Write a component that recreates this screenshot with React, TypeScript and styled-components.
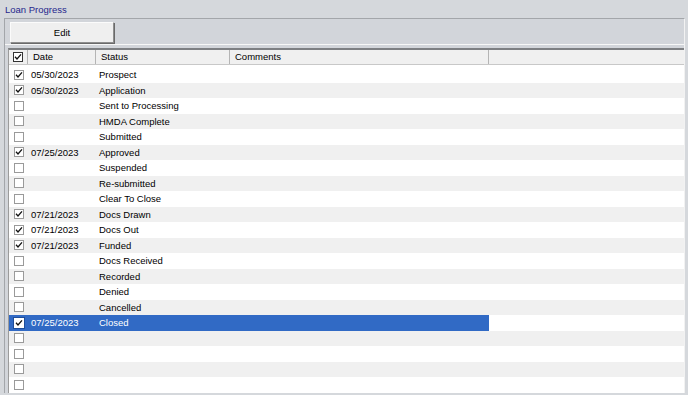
import React from 'react'
import styled, { createGlobalStyle } from 'styled-components'

interface IStep {
  date: string
  status: string
  checked: boolean
}

const steps: IStep[] = [
  { date: '05/30/2023', status: 'Prospect', checked: true },
  { date: '05/30/2023', status: 'Application', checked: true },
  { date: '', status: 'Sent to Processing', checked: false },
  { date: '', status: 'HMDA Complete', checked: false },
  { date: '', status: 'Submitted', checked: false },
  { date: '07/25/2023', status: 'Approved', checked: true },
  { date: '', status: 'Suspended', checked: false },
  { date: '', status: 'Re-submitted', checked: false },
  { date: '', status: 'Clear To Close', checked: false },
  { date: '07/21/2023', status: 'Docs Drawn', checked: true },
  { date: '07/21/2023', status: 'Docs Out', checked: true },
  { date: '07/21/2023', status: 'Funded', checked: true },
  { date: '', status: 'Docs Received', checked: false },
  { date: '', status: 'Recorded', checked: false },
  { date: '', status: 'Denied', checked: false },
  { date: '', status: 'Cancelled', checked: false },
  { date: '07/25/2023', status: 'Closed', checked: true },
  { date: '', status: '', checked: false },
  { date: '', status: '', checked: false },
  { date: '', status: '', checked: false },
  { date: '', status: '', checked: false },
]

const SELECTED = 16

const GlobalStyle = createGlobalStyle`
  body {
    margin: 0;
    background: #d5d8dc;
    font-family: "Liberation Sans", Arial, sans-serif;
    font-size: 9.5px;
    color: #000;
    overflow: hidden;
  }
`

const Check: React.FC<{ on: boolean; header?: boolean; inverted?: boolean }> = ({ on, header, inverted }) => (
  <CheckBox $header={header} $inverted={inverted}>
    {on && (
      <svg width="8" height="8" viewBox="0 0 8 8">
        <path d="M1 3.8 L3 6 L7 1.4" fill="none" stroke="#111" strokeWidth="1.3" />
      </svg>
    )}
  </CheckBox>
)

export default function App() {
  return (
    <Page>
      <GlobalStyle />
      <Title>Loan Progress</Title>
      <Group>
        <Toolbar>
          <EditButton>Edit</EditButton>
        </Toolbar>
        <Grid>
          <HeaderRow>
            <HeadCell $w={19} $center>
              <Check on header />
            </HeadCell>
            <HeadCell $w={68}>Date</HeadCell>
            <HeadCell $w={134}>Status</HeadCell>
            <HeadCell $w={259}>Comments</HeadCell>
            <HeadFill />
          </HeaderRow>
          <Body>
            {steps.map((s, i) => (
              <Row key={i} $alt={i % 2 === 1}>
                <RowSelect $selected={i === SELECTED}>
                  <Cell $w={19} $center>
                    <Check on={s.checked} inverted={i === SELECTED} />
                  </Cell>
                  <Cell $w={68}>{s.date}</Cell>
                  <Cell $w={134}>{s.status}</Cell>
                  <Cell $w={259} />
                </RowSelect>
              </Row>
            ))}
          </Body>
        </Grid>
      </Group>
    </Page>
  )
}

const Page = styled.div`
  width: 688px;
  height: 395px;
  overflow: hidden;
`

const Title = styled.div`
  height: 18px;
  padding-left: 5px;
  line-height: 20px;
  color: #26268c;
`

const Group = styled.div`
  margin-left: 4px;
  width: 679px;
  border-top: 1px solid #a3a6aa;
  border-left: 1px solid #a3a6aa;
  border-right: 1px solid #f2f2f2;
  background: #d2d5da;
`

const Toolbar = styled.div`
  height: 26px;
  padding: 3px 0 0 5px;
  box-sizing: border-box;
  border-bottom: 1px solid #f7f7f7;
`

const EditButton = styled.div`
  width: 104px;
  height: 21px;
  box-sizing: border-box;
  display: flex;
  align-items: center;
  justify-content: center;
  background: #efefef;
  border: 1px solid #fbfbfb;
  border-right-color: #8e8e8e;
  border-bottom-color: #8e8e8e;
  box-shadow: 1px 1px 0 #6a6a6a;
`

const Grid = styled.div`
  margin: 3px 0 0 3px;
  border-top: 2px solid #7d7f82;
  border-left: 1px solid #9b9b9b;
  background: #fff;
`

const HeaderRow = styled.div`
  display: flex;
  height: 15px;
  background: #f0f0f0;
  border-bottom: 1px solid #c8c8c8;
  box-sizing: border-box;
`

const HeadCell = styled.div<{ $w: number; $center?: boolean }>`
  width: ${(p) => p.$w}px;
  flex: none;
  box-sizing: border-box;
  display: flex;
  align-items: center;
  justify-content: ${(p) => (p.$center ? 'center' : 'flex-start')};
  padding-left: ${(p) => (p.$center ? 0 : 5)}px;
  border-right: 1px solid #b4b4b4;
  line-height: 14px;
`

const HeadFill = styled.div`
  flex: 1;
`

const Body = styled.div`
  padding-top: 2px;
`

const Row = styled.div<{ $alt: boolean }>`
  height: 15.5px;
  display: flex;
  background: ${(p) => (p.$alt ? '#f0f0f0' : '#fff')};
`

const RowSelect = styled.div<{ $selected: boolean }>`
  display: flex;
  height: 100%;
  background: ${(p) => (p.$selected ? '#316ac5' : 'transparent')};
  color: ${(p) => (p.$selected ? '#fff' : '#000')};
`

const Cell = styled.div<{ $w: number; $center?: boolean }>`
  width: ${(p) => p.$w}px;
  flex: none;
  box-sizing: border-box;
  display: flex;
  align-items: center;
  justify-content: ${(p) => (p.$center ? 'center' : 'flex-start')};
  padding-left: ${(p) => (p.$center ? 0 : 3)}px;
  white-space: nowrap;
`

const CheckBox = styled.div<{ $header?: boolean; $inverted?: boolean }>`
  width: 10px;
  height: 10px;
  box-sizing: border-box;
  display: flex;
  align-items: center;
  justify-content: center;
  background: #fff;
  border: 1px solid ${(p) => (p.$header ? '#333' : p.$inverted ? '#fff' : '#9a9a9a')};
  box-shadow: ${(p) => (p.$inverted ? '0 0 0 1px #1e4d9a' : 'none')};
`
